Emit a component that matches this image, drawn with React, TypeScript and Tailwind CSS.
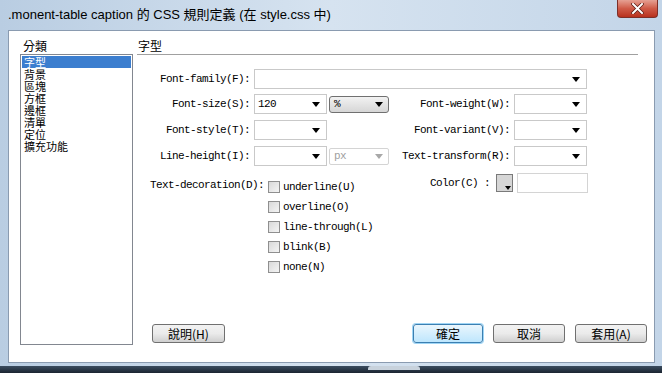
import React from 'react';

const mono = "font-['Liberation_Mono',monospace] text-[11px] tracking-[-0.6px] text-black";
const cjk = "font-['Noto_Sans_CJK_TC',sans-serif]";

const Arrow: React.FC<{ muted?: boolean }> = ({ muted }) => (
  <svg width="8" height="5" viewBox="0 0 8 5" className="shrink-0">
    <path d="M0 0 H8 L4 5 Z" fill={muted ? '#a8a8a8' : '#000'} />
  </svg>
);

const Combo: React.FC<{ w: string; value?: string }> = ({ w, value }) => (
  <div className={`${w} h-5 border border-[#c9c9c9] bg-white flex items-center justify-between pl-[3px] pr-[6px]`}>
    <span className={mono}>{value}</span>
    <Arrow />
  </div>
);

const Label: React.FC<{ w: string; text: string }> = ({ w, text }) => (
  <div className={`${w} shrink-0 text-right ${mono}`}>{text}</div>
);

const Check: React.FC<{ text: string }> = ({ text }) => (
  <div className="h-5 flex items-center gap-[3px]">
    <div className="w-3 h-3 border border-[#8f8f8f] bg-gradient-to-br from-[#d9d9d9] to-[#f4f4f4]" />
    <span className={mono}>{text}</span>
  </div>
);

const Btn: React.FC<{ w: string; text: string; primary?: boolean }> = ({ w, text, primary }) => (
  <div
    className={`${w} h-[19px] rounded-[3px] border flex items-center justify-center text-[12px] text-black ${cjk} bg-gradient-to-b ${
      primary
        ? 'border-[#3c7fb1] from-[#eaf6fd] to-[#bee6fd] shadow-[0_0_0_1px_#9fd5f5]'
        : 'border-[#707070] from-[#f2f2f2] via-[#ebebeb] to-[#cfcfcf]'
    }`}
  >
    {text}
  </div>
);

const categories = ['字型', '背景', '區塊', '方框', '邊框', '清單', '定位', '擴充功能'];

export default function App() {
  return (
    <div className="w-[662px] h-[373px] overflow-hidden flex flex-col bg-gradient-to-r from-[#b9cde2] via-[#d6e3f0] to-[#c3d5e8]">
      {/* title bar */}
      <div className="h-[30px] flex items-start justify-between pl-[8px] pr-[4px]">
        <div className={`pt-[5px] text-[13px] text-black font-['Liberation_Sans','Noto_Sans_CJK_TC',sans-serif]`}>
          .monent-table caption 的 CSS 規則定義 (在 style.css 中)
        </div>
        <div className="w-[41px] h-[18px] rounded-b-[4px] border border-t-0 border-[#7d2f28] bg-gradient-to-b from-[#e5a093] via-[#cf5a47] to-[#b8301c] flex items-center justify-center">
          <svg width="13" height="11" viewBox="0 0 13 11">
            <path d="M2 1 L11 10 M11 1 L2 10" stroke="#5a1a12" strokeWidth="3.4" strokeLinecap="square" />
            <path d="M2 1 L11 10 M11 1 L2 10" stroke="#fff" strokeWidth="2" strokeLinecap="square" />
          </svg>
        </div>
      </div>

      {/* body */}
      <div className="flex">
        <div className="w-[8px]" />
        <div className="w-[647px] h-[333px] bg-white border border-[#8a9bb0] flex">
          {/* left column */}
          <div className="ml-[11px] w-[113px] flex flex-col pt-[7px] pb-[17px]">
            <div className={`${cjk} text-[12px] leading-[15px] text-black pl-[3px]`}>分類</div>
            <div className="mt-[1px] flex-1 border border-[#828790] bg-white py-px px-px">
              {categories.map((c, i) => (
                <div
                  key={c}
                  className={`h-[12px] leading-[12px] text-[11px] pl-[2px] ${cjk} ${
                    i === 0 ? 'bg-[#3c7ecf] text-white' : 'text-black'
                  }`}
                >
                  {c}
                </div>
              ))}
            </div>
          </div>

          {/* right column */}
          <div className="ml-[4px] flex-1 flex flex-col pt-[7px] pr-[7px] pb-[19px]">
            <div className={`${cjk} text-[12px] leading-[15px] text-black pl-[1px]`}>字型</div>
            <div className="h-px bg-[#a0a0a0] mr-[9px] mt-[1px]" />

            <div className="mt-[14px] flex flex-col gap-[5px]">
              <div className="flex items-center gap-[4px]">
                <Label w="w-[113px]" text="Font-family(F):" />
                <Combo w="w-[333px]" />
              </div>
              <div className="flex items-center">
                <Label w="w-[113px]" text="Font-size(S):" />
                <div className="ml-[4px]"><Combo w="w-[73px]" value="120" /></div>
                <div className="ml-[2px] w-[60px] h-[17px] rounded-[3px] border border-[#707070] bg-gradient-to-b from-[#f2f2f2] to-[#d6d6d6] flex items-center justify-between pl-[4px] pr-[5px]">
                  <span className={mono}>%</span>
                  <Arrow />
                </div>
                <Label w="w-[121px]" text="Font-weight(W):" />
                <div className="ml-[4px]"><Combo w="w-[73px]" /></div>
              </div>
              <div className="flex items-center mt-[1px]">
                <Label w="w-[113px]" text="Font-style(T):" />
                <div className="ml-[4px]"><Combo w="w-[73px]" /></div>
                <div className="w-[62px]" />
                <Label w="w-[121px]" text="Font-variant(V):" />
                <div className="ml-[4px]"><Combo w="w-[73px]" /></div>
              </div>
              <div className="flex items-center mt-[1px]">
                <Label w="w-[113px]" text="Line-height(I):" />
                <div className="ml-[4px]"><Combo w="w-[73px]" /></div>
                <div className="ml-[2px] w-[60px] h-[17px] rounded-[2px] border border-[#d4d4d4] bg-white flex items-center justify-between pl-[4px] pr-[5px]">
                  <span className={`${mono} !text-[#a0a0a0]`}>px</span>
                  <Arrow muted />
                </div>
                <Label w="w-[121px]" text="Text-transform(R):" />
                <div className="ml-[4px]"><Combo w="w-[73px]" /></div>
              </div>
            </div>

            <div className="mt-[7px] flex items-start">
              <div className="w-[252px] flex mt-[4px]">
                <Label w="w-[127px]" text="Text-decoration(D):" />
                <div className="ml-[4px] flex flex-col">
                  <Check text="underline(U)" />
                  <Check text="overline(O)" />
                  <Check text="line-through(L)" />
                  <Check text="blink(B)" />
                  <Check text="none(N)" />
                </div>
              </div>
              <div className="w-[199px] flex items-center justify-end">
                <span className={mono}>Color(C) :</span>
                <div className="ml-[6px] w-[17px] h-[18px] border border-[#7a7a7a] bg-[#d6d6d6] flex items-end justify-end p-px">
                  <svg width="6" height="4" viewBox="0 0 6 4"><path d="M0 0 H6 L3 4 Z" fill="#000" /></svg>
                </div>
                <div className="ml-[4px] w-[71px] h-5 border border-[#d4d4d4] bg-white" />
              </div>
            </div>

            <div className="mt-auto flex items-center">
              <div className="ml-[15px]"><Btn w="w-[73px]" text="說明(H)" /></div>
              <div className="ml-auto flex gap-[10px]">
                <Btn w="w-[70px]" text="確定" primary />
                <Btn w="w-[72px]" text="取消" />
                <Btn w="w-[72px]" text="套用(A)" />
              </div>
            </div>
          </div>
        </div>
        <div className="flex-1" />
      </div>

      {/* bottom edge */}
      <div className="h-[3px]" />
      <div className="flex-1 bg-gradient-to-b from-[#3b4d60] to-[#1b2531] flex items-start">
        <div className="ml-[368px] w-[52px] h-[4px] rounded-t-[3px] bg-[#c8d2dc]" />
      </div>
    </div>
  );
}
